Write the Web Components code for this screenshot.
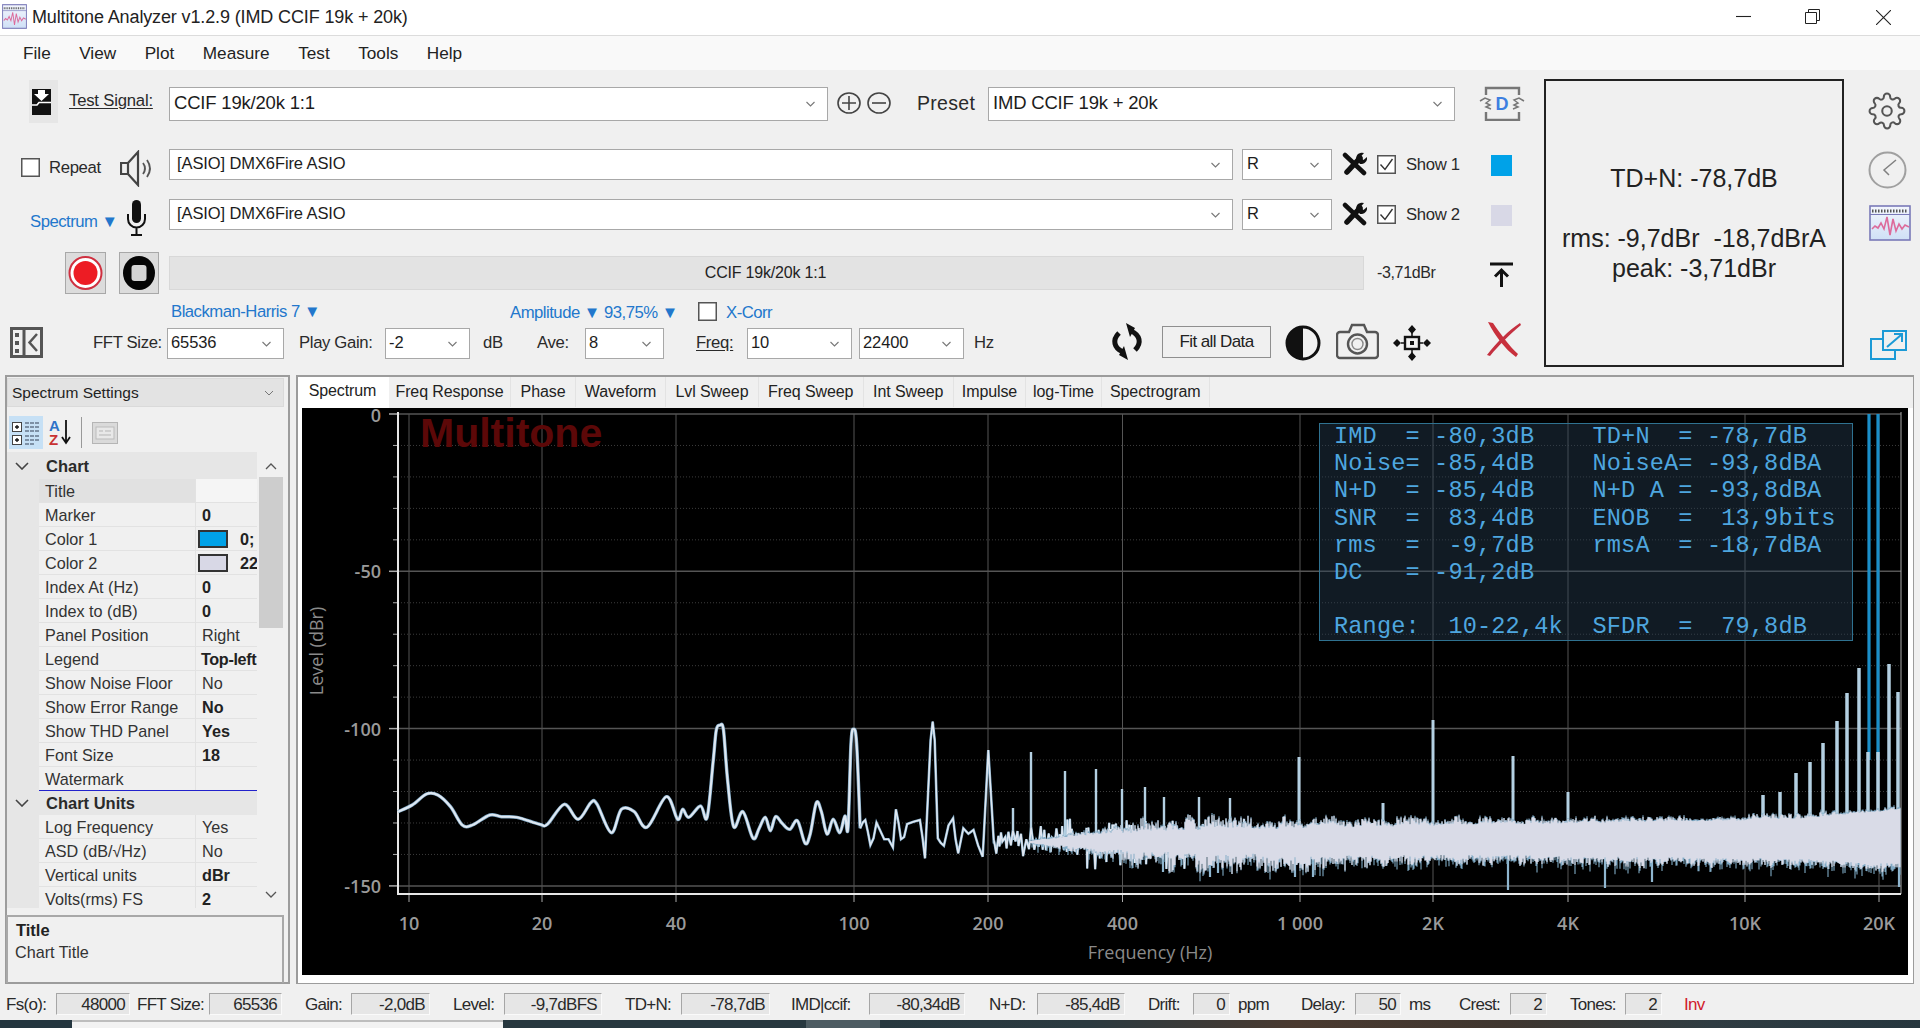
<!DOCTYPE html>
<html>
<head>
<meta charset="utf-8">
<title>Multitone Analyzer</title>
<style>
  html, body { margin: 0; padding: 0; background: #f0f0f0; }
  body { font-family: "Liberation Sans", "DejaVu Sans", sans-serif; color: #1c1c1c; }
</style>
</head>
<body>
<mt-app></mt-app>
<script>
const ICONS = {
  wave: [42, 36, `<defs><linearGradient id="wg" x1="0" y1="0" x2="0" y2="1"><stop offset="0" stop-color="#f3f6fd"/><stop offset="1" stop-color="#cfe0f6"/></linearGradient></defs>
    <rect x="1" y="1" width="40" height="34" fill="url(#wg)" stroke="#7a7ab8" stroke-width="1.6"/>
    <path d="M3 6H39" stroke="#555" stroke-width="3" stroke-dasharray="1.5 1.5"/><path d="M1 9.5H41" stroke="#7a7ab8"/>
    <path d="M3 24l3-3 3 2 3-5 3 6 3-12 3 18 3-16 3 12 3-7 3 5 3-4 4 2" fill="none" stroke="#dd6b9b" stroke-width="1.6"/>`],
  signal: [29, 43, `<rect width="29" height="43" fill="#e6e6e6"/><path d="M3 9h19v26H3z" fill="#111"/>
    <path d="M9 10h7v4h4l-7.500 7L5 14h4z" fill="#fff"/><path d="M3 25H8l2-2.500h12" fill="none" stroke="#fff" stroke-width="1.600"/>`],
  plus: [24, 22, `<ellipse cx="12" cy="11" rx="11" ry="10" fill="none" stroke="#444" stroke-width="1.600"/><path d="M5 11H19M12 4V18" stroke="#444" stroke-width="1.600"/>`],
  minus: [24, 22, `<ellipse cx="12" cy="11" rx="11" ry="10" fill="none" stroke="#444" stroke-width="1.600"/><path d="M5 11H19" stroke="#444" stroke-width="1.600"/>`],
  dsp: [46, 35, `<path d="M7 9V2H40V9M40 26V34H7V26" fill="none" stroke="#777" stroke-width="2.400"/><path d="M1 15l5-3 5 2-4 3 4 2-4 2 5 2M45 15l-5-3-5 2 4 3-4 2 4 2-5 2" fill="none" stroke="#777" stroke-width="1.500"/>
    <text x="23" y="23.500" text-anchor="middle" font-family="Liberation Sans" font-weight="700" font-size="18" fill="#3d7fe0">D</text>`],
  speaker: [35, 37, `<path d="M1 13h7v11H1zM8 13 18 2V35L8 24" fill="none" stroke="#444" stroke-width="2.200"/><path d="M23 13q4 5.500 0 11M27 10q6 8.500 0 17" fill="none" stroke="#555" stroke-width="1.800"/>`],
  mic: [21, 36, `<rect x="6" y="0" width="9" height="23" rx="4.500" fill="#111"/><path d="M2 14v5a8.500 8.500 0 0 0 17 0v-5M10.500 28V35M5 35H16" fill="none" stroke="#111" stroke-width="2"/>`],
  tools: [25, 24, `<path d="M3 3 22 21" stroke="#111" stroke-width="4.500" stroke-linecap="round"/><path d="M18 6 5 20" stroke="#111" stroke-width="5.500" stroke-linecap="round"/>
    <path d="M14 7a6 6 0 0 1 8-6l-3.500 4 3 3 3.500-3a6 6 0 0 1-7 7z" fill="#111"/>`],
  record: [41, 42, `<rect x=".5" y=".5" width="40" height="41" fill="#dcdcdc" stroke="#a8a8a8"/><circle cx="20.500" cy="21" r="16" fill="#fff" stroke="#cf3040" stroke-width="2"/><circle cx="20.500" cy="21" r="12" fill="#ed1c24"/>`],
  stop: [40, 42, `<rect x=".5" y=".5" width="39" height="41" fill="#dcdcdc" stroke="#a8a8a8"/><ellipse cx="20" cy="21" rx="16" ry="17" fill="#050505"/><rect x="12.500" y="13" width="15" height="16" rx="3" fill="#d4d4d4"/>`],
  up: [25, 25, `<path d="M1 2H24M12.500 25V8M6 14.500 12.500 8 19 14.500" fill="none" stroke="#111" stroke-width="3"/>`],
  toggle: [33, 31, `<rect x="1.500" y="1.500" width="30" height="28" fill="none" stroke="#555" stroke-width="3"/><path d="M14 2V29" stroke="#555" stroke-width="3"/><path d="M5 6h4v4H5zM5 14h4v4H5zM5 22h4v4H5z" fill="#555"/><path d="M27 7 19.500 15.500 27 24" fill="none" stroke="#555" stroke-width="2.500"/>`],
  refresh: [32, 37, `<path d="M24 27C31 20 29 12 20 8" fill="none" stroke="#111" stroke-width="5"/><path d="M8 10C1 17 3 25 12 29" fill="none" stroke="#111" stroke-width="5"/><path d="M15 0 24 5 19 14zM17 37 8 32 13 23z" fill="#111"/>`],
  contrast: [36, 36, `<circle cx="18" cy="18" r="16" fill="none" stroke="#111" stroke-width="3"/><path d="M18 2a16 16 0 0 0 0 32z" fill="#111"/>`],
  camera: [43, 37, `<path d="M4 9h9l3-7h12l3 7h8a3 3 0 0 1 3 3v20a3 3 0 0 1-3 3H4a3 3 0 0 1-3-3V12a3 3 0 0 1 3-3z" fill="none" stroke="#555" stroke-width="2.400"/><circle cx="21.500" cy="21" r="9.500" fill="none" stroke="#555" stroke-width="2.400"/><circle cx="21.500" cy="21" r="5.500" fill="none" stroke="#888" stroke-width="1.400"/>`],
  move: [38, 36, `<rect x="12" y="12" width="14" height="12" fill="none" stroke="#111" stroke-width="2.400"/><rect x="17" y="16" width="4" height="4" fill="#111"/><path d="M19 0l4 4.500-4 4.500-4-4.500zM19 27l4 4.500-4 4.500-4-4.500zM0 18l4-4 4 4-4 4zM30 18l4-4 4 4-4 4z" fill="#111"/><path d="M19 8V12M19 24V28M8 18H12M26 18H30" stroke="#111" stroke-width="1.500"/>`],
  cross: [36, 35, `<path d="M3 0 8 1C15 11 24 24 33 32L31 35C20 27 10 14 3 0z" fill="#c8303c"/><path d="M35 1C24 8 11 21 2 33L5 34C14 23 26 11 36 3z" fill="#c43040"/>`],
  gear: [24, 24, `<g fill="none" stroke="#555" stroke-width="1.300"><path d="M12 15a3 3 0 1 0 0-6 3 3 0 0 0 0 6z"/><path d="M19.400 15a1.650 1.650 0 0 0 .33 1.820l.06.06a2 2 0 0 1 0 2.830 2 2 0 0 1-2.830 0l-.06-.06a1.650 1.650 0 0 0-1.820-.33 1.650 1.650 0 0 0-1 1.510V21a2 2 0 0 1-2 2 2 2 0 0 1-2-2v-.09A1.650 1.650 0 0 0 9 19.400a1.650 1.650 0 0 0-1.820.33l-.06.06a2 2 0 0 1-2.830 0 2 2 0 0 1 0-2.830l.06-.06a1.650 1.650 0 0 0 .33-1.820 1.650 1.650 0 0 0-1.510-1H3a2 2 0 0 1-2-2 2 2 0 0 1 2-2h.09A1.650 1.650 0 0 0 4.600 9a1.650 1.650 0 0 0-.33-1.820l-.06-.06a2 2 0 0 1 0-2.830 2 2 0 0 1 2.830 0l.06.06a1.650 1.650 0 0 0 1.820.33H9a1.650 1.650 0 0 0 1-1.510V3a2 2 0 0 1 2-2 2 2 0 0 1 2 2v.09a1.650 1.650 0 0 0 1 1.510 1.650 1.650 0 0 0 1.820-.33l.06-.06a2 2 0 0 1 2.830 0 2 2 0 0 1 0 2.830l-.06.06a1.650 1.650 0 0 0-.33 1.820V9a1.650 1.650 0 0 0 1.510 1H21a2 2 0 0 1 2 2 2 2 0 0 1-2 2h-.09a1.650 1.650 0 0 0-1.510 1z"/></g>`],
  clock: [39, 38, `<ellipse cx="19.500" cy="19" rx="18" ry="17.500" fill="none" stroke="#a0a0a0" stroke-width="2"/><path d="M28 9 16 19l5 5" fill="none" stroke="#808080" stroke-width="1.500"/>`],
  popout: [37, 30, `<rect x="1" y="9" width="24" height="20" fill="none" stroke="#1c9ad6" stroke-width="2"/><rect x="13" y="1" width="23" height="19" fill="#f0f0f0" stroke="#1c9ad6" stroke-width="2"/><path d="M17 17 31 5M24 4H32V12" fill="none" stroke="#1c9ad6" stroke-width="2"/>`],
  min: [15, 15, `<path d="M0 7.500H15" stroke="#222" stroke-width="1.100"/>`],
  restore: [15, 15, `<path d="M.5 3.500h11v11H.5zM3.500 3.500V.5h11v11h-3" fill="none" stroke="#222"/>`],
  close: [15, 15, `<path d="M0 0 15 15M15 0 0 15" stroke="#222" stroke-width="1.100"/>`],
  cats: [34, 33, `<rect width="34" height="33" fill="#c6e0f5"/><g fill="#fff" stroke="#444"><rect x="3.500" y="6.500" width="9" height="9"/><rect x="3.500" y="19.500" width="9" height="9"/></g><path d="M6 11h4M8 9v4M6 24h4M8 22v4" stroke="#111" stroke-width="1.300"/><path d="M16 7h15M16 11h15M16 15h15M16 20h15M16 24h15M16 28h10" stroke="#65758a" stroke-width="1.300" stroke-dasharray="4 1"/>`],
  az: [24, 33, `<text x="1" y="15" font-family="Liberation Sans" font-weight="700" font-size="15" fill="#2f73c8">A</text><text x="1" y="29" font-family="Liberation Sans" font-weight="700" font-size="15" fill="#c83232">Z</text><path d="M18 4V26M14 21l4 6 4-6" fill="none" stroke="#111" stroke-width="1.800"/>`],
  pages: [26, 22, `<rect x=".5" y=".5" width="25" height="21" fill="#dadada" stroke="#b5b5b5"/><rect x="4" y="5" width="18" height="12" fill="#e8e8e8" stroke="#bbb"/><path d="M7 9h4M13 9h6M7 13h12" stroke="#b5b5b5"/>`]
};

class MtIcon extends HTMLElement {
  constructor() {
    super();
    this.attachShadow({ mode: 'open' });
  }
  connectedCallback() {
    const [w, h, body] = ICONS[this.getAttribute('name')];
    const dw = this.getAttribute('w') || w;
    const dh = this.getAttribute('h') || h;
    this.shadowRoot.innerHTML = `<style>:host{display:block;flex:none;width:${dw}px;height:${dh}px}svg{display:block}</style>
      <svg width="${dw}" height="${dh}" viewBox="0 0 ${w} ${h}" preserveAspectRatio="none">${body}</svg>`;
  }
}
customElements.define('mt-icon', MtIcon);

class MtCombo extends HTMLElement {
  constructor() {
    super();
    this.attachShadow({ mode: 'open' });
  }
  connectedCallback() {
    this.shadowRoot.innerHTML = `<style>
      :host{display:flex;flex:none;box-sizing:border-box;align-items:center;background:#fff;border:1px solid #a8a8a8;
        font-size:var(--combo-size,16.5px);letter-spacing:var(--combo-ls,-.1px);color:#1c1c1c;height:31px}
      span{flex:1;padding:0 0 2px var(--combo-pad,3px);white-space:nowrap}
      svg{flex:none;margin-right:12px}
    </style><span>${this.getAttribute('value') || ''}</span>
    <svg width="9" height="6" viewBox="0 0 9 6"><path d="M.5 1 4.500 5 8.500 1" fill="none" stroke="#777" stroke-width="1.100"/></svg>`;
  }
}
customElements.define('mt-combo', MtCombo);

class MtCheck extends HTMLElement {
  constructor() {
    super();
    this.attachShadow({ mode: 'open' });
  }
  connectedCallback() {
    const tick = this.hasAttribute('checked') ? '<path d="M3.500 9.500 8 14.500 15.500 4" fill="none" stroke="#333" stroke-width="1.400"/>' : '';
    this.shadowRoot.innerHTML = `<style>:host{display:block;flex:none;width:19px;height:19px}svg{display:block}</style>
      <svg width="19" height="19" viewBox="0 0 19 19"><rect x=".75" y=".75" width="17.500" height="17.500" fill="#fff" stroke="#555" stroke-width="1.500"/>${tick}</svg>`;
  }
}
customElements.define('mt-check', MtCheck);

class MtTitlebar extends HTMLElement {
  constructor() {
    super();
    this.attachShadow({ mode: 'open' });
  }
  connectedCallback() {
    this.shadowRoot.innerHTML = `<style>
      :host{display:flex;flex:none;height:36px;box-sizing:border-box;background:#fff;border-bottom:1px solid #dcdcdc;align-items:center;padding-left:2px}
      .t{margin-left:5px;font-size:18px;letter-spacing:-.13px;flex:1;color:#222;white-space:nowrap}
      .w{margin-bottom:2px}
    </style>
    <mt-icon name="wave" w="25" h="25" class="w"></mt-icon><div class="t"><slot></slot></div>
    <mt-icon name="min" class="w"></mt-icon><mt-icon name="restore" class="w" style="margin-left:54px"></mt-icon><mt-icon name="close" class="w" style="margin:0 29px 0 56px"></mt-icon>`;
  }
}
customElements.define('mt-titlebar', MtTitlebar);

class MtMenubar extends HTMLElement {
  constructor() {
    super();
    this.attachShadow({ mode: 'open' });
  }
  connectedCallback() {
    const items = ['File', 'View', 'Plot', 'Measure', 'Test', 'Tools', 'Help'];
    this.shadowRoot.innerHTML = `<style>
      :host{display:flex;flex:none;height:34px;background:#f9f9f9;align-items:center;padding-left:23px;gap:28.500px;font-size:17.200px;color:#222}
    </style>${items.map(i => `<span>${i}</span>`).join('')}`;
  }
}
customElements.define('mt-menubar', MtMenubar);

class MtToolbar extends HTMLElement {
  constructor() {
    super();
    this.attachShadow({ mode: 'open' });
  }
  connectedCallback() {
    this.shadowRoot.innerHTML = `<style>
      :host{display:flex;flex:none;height:305px;background:#f0f0f0;--combo-size:16.500px}
      .left{width:1544px;flex:none;display:flex;flex-direction:column}
      .row{display:flex;align-items:flex-start;flex:none}
      .t{flex:none;line-height:20px;font-size:16.700px;letter-spacing:-.35px;white-space:nowrap;color:#2a2a2a}
      .b{color:#2277cc;letter-spacing:-.5px}
      u{text-underline-offset:2px}
      .bar{flex:none;box-sizing:border-box;height:34px;background:#e3e3e3;border:1px solid #d8d8d8;display:flex;align-items:center;justify-content:center;font-size:16px;letter-spacing:-.2px;padding-right:2px;color:#222}
      .sq{flex:none;width:21px;height:21px}
      .big{--combo-size:18.500px;--combo-ls:-.2px}
      mt-combo.big{height:34px}
      button{flex:none;box-sizing:border-box;width:109px;height:32px;background:#f0f0f0;border:1.500px solid #8f8f8f;font:inherit;font-size:17px;letter-spacing:-.6px;color:#222;padding:0}
      .thd{flex:none;box-sizing:border-box;width:300px;height:288px;margin-top:9px;border:2px solid #222;display:flex;flex-direction:column;align-items:center;justify-content:center;font-size:25px;line-height:30px;color:#222;white-space:pre}
      .side{flex:none;margin-left:24px;display:flex;flex-direction:column}
    </style>
    <div class="left">
      <div class="row" style="margin-top:10px;height:43px">
        <mt-icon name="signal" style="margin-left:29px"></mt-icon>
        <span class="t" style="margin:11px 0 0 11px;width:85px;letter-spacing:-.2px"><u>Test Signal:</u></span>
        <mt-combo class="big" value="CCIF 19k/20k 1:1" style="margin:7px 0 0 15px;width:659px;--combo-pad:4px"></mt-combo>
        <mt-icon name="plus" style="margin:12px 0 0 9px"></mt-icon>
        <mt-icon name="minus" style="margin:12px 0 0 6px"></mt-icon>
        <span class="t" style="margin:13px 0 0 26px;width:61px;font-size:19.500px;letter-spacing:.3px">Preset</span>
        <mt-combo class="big" value="IMD CCIF 19k + 20k" style="margin:7px 0 0 10px;width:467px;--combo-pad:4px"></mt-combo>
        <mt-icon name="dsp" style="margin:6px 0 0 24px"></mt-icon>
      </div>
      <div class="row" style="margin-top:26px;height:38px">
        <mt-check style="margin:9px 0 0 21px"></mt-check>
        <span class="t" style="margin:9px 0 0 9px;width:51px">Repeat</span>
        <mt-icon name="speaker" style="margin:1px 0 0 20px"></mt-icon>
        <mt-combo value="[ASIO] DMX6Fire ASIO" style="margin-left:14px;width:1064px;--combo-pad:7px"></mt-combo>
        <mt-combo value="R" style="margin-left:9px;width:90px;--combo-pad:4px"></mt-combo>
        <mt-icon name="tools" style="margin:3px 0 0 10px"></mt-icon>
        <mt-check checked style="margin:6px 0 0 10px"></mt-check>
        <span class="t" style="margin:6px 0 0 10px;width:53px">Show 1</span>
        <div class="sq" style="margin:6px 0 0 32px;background:#00a2e8"></div>
      </div>
      <div class="row" style="margin-top:12px;height:37px">
        <span class="t b" style="margin:13px 0 0 30px;width:96px">Spectrum ▼</span>
        <mt-icon name="mic" style="margin-top:1px"></mt-icon>
        <mt-combo value="[ASIO] DMX6Fire ASIO" style="margin-left:22px;width:1064px;--combo-pad:7px"></mt-combo>
        <mt-combo value="R" style="margin-left:9px;width:90px;--combo-pad:4px"></mt-combo>
        <mt-icon name="tools" style="margin:3px 0 0 10px"></mt-icon>
        <mt-check checked style="margin:6px 0 0 10px"></mt-check>
        <span class="t" style="margin:6px 0 0 10px;width:53px">Show 2</span>
        <div class="sq" style="margin:6px 0 0 32px;background:#d8d8e6"></div>
      </div>
      <div class="row" style="margin-top:16px;height:42px">
        <mt-icon name="record" style="margin-left:65px"></mt-icon>
        <mt-icon name="stop" style="margin-left:13px"></mt-icon>
        <div class="bar" style="margin:4px 0 0 10px;width:1195px">CCIF 19k/20k 1:1</div>
        <span class="t" style="margin:11px 0 0 13px;width:60px;font-size:16px">-3,71dBr</span>
        <mt-icon name="up" style="margin:10px 0 0 52px"></mt-icon>
      </div>
      <div class="row" style="margin-top:8px;height:21px">
        <span class="t b" style="margin-left:171px;width:339px">Blackman-Harris 7 ▼</span>
        <span class="t b" style="margin-top:1px;width:188px">Amplitude ▼ 93,75% ▼</span>
        <mt-check></mt-check>
        <span class="t b" style="margin:1px 0 0 9px">X-Corr</span>
      </div>
      <div class="row" style="height:37px">
        <mt-icon name="toggle" style="margin:4px 0 0 10px"></mt-icon>
        <span class="t" style="margin:10px 0 0 50px;width:74px">FFT Size:</span>
        <mt-combo value="65536" style="margin-top:5px;width:117px"></mt-combo>
        <span class="t" style="margin:10px 0 0 15px;width:86px">Play Gain:</span>
        <mt-combo value="-2" style="margin-top:5px;width:85px"></mt-combo>
        <span class="t" style="margin:10px 0 0 13px;width:54px">dB</span>
        <span class="t" style="margin-top:10px;width:48px">Ave:</span>
        <mt-combo value="8" style="margin-top:5px;width:79px"></mt-combo>
        <span class="t" style="margin:10px 0 0 32px;width:51px"><u>Freq:</u></span>
        <mt-combo value="10" style="margin-top:5px;width:105px"></mt-combo>
        <mt-combo value="22400" style="margin:5px 0 0 7px;width:105px"></mt-combo>
        <span class="t" style="margin:10px 0 0 10px;width:137px">Hz</span>
        <mt-icon name="refresh"></mt-icon>
        <button style="margin:3px 0 0 19px">Fit all Data</button>
        <mt-icon name="contrast" style="margin:2px 0 0 14px"></mt-icon>
        <mt-icon name="camera" style="margin-left:15px"></mt-icon>
        <mt-icon name="move" style="margin:2px 0 0 14px"></mt-icon>
        <mt-icon name="cross" style="margin:-1px 0 0 54px"></mt-icon>
      </div>
    </div>
    <div class="thd">
      <div>TD+N: -78,7dB</div>
      <div style="height:30px"></div>
      <div>rms: -9,7dBr  -18,7dBrA</div>
      <div>peak: -3,71dBr</div>
    </div>
    <div class="side">
      <mt-icon name="gear" w="38" h="38" style="margin-top:22px"></mt-icon>
      <mt-icon name="clock" style="margin-top:21px"></mt-icon>
      <mt-icon name="wave" style="margin-top:16px;margin-left:1px"></mt-icon>
      <mt-icon name="popout" style="margin-top:89px;margin-left:2px"></mt-icon>
    </div>`;
  }
}
customElements.define('mt-toolbar', MtToolbar);

class MtProps extends HTMLElement {
  constructor() {
    super();
    this.attachShadow({ mode: 'open' });
  }
  connectedCallback() {
    const rows = [
      ['h', 'Chart'], ['Title', '', 's'], ['Marker', '0', 'b'],
      ['Color 1', '0;', 'c', '#00a2e8'], ['Color 2', '22', 'c', '#d8d8e6'],
      ['Index At (Hz)', '0', 'b'], ['Index to (dB)', '0', 'b'], ['Panel Position', 'Right'],
      ['Legend', 'Top-left', 'b tight'], ['Show Noise Floor', 'No'], ['Show Error Range', 'No', 'b'],
      ['Show THD Panel', 'Yes', 'b'], ['Font Size', '18', 'b'], ['Watermark', '', 'l'],
      ['h', 'Chart  Units'], ['Log Frequency', 'Yes'], ['ASD (dB/√Hz)', 'No'],
      ['Vertical units', 'dBr', 'b'], ['Volts(rms) FS', '2', 'b']
    ];
    const html = rows.map((r, i) => {
      if (r[0] === 'h') {
        return `<div class="r hd${i ? '' : ' first'}"><svg width="14" height="8" viewBox="0 0 14 8"><path d="M1 1 7 7 13 1" fill="none" stroke="#444" stroke-width="1.600"/></svg><b>${r[1]}</b></div>`;
      }
      const cls = r[2] || '';
      let val = r[1];
      if (cls === 'c') val = `<i style="background:${r[3]}"></i><b>${r[1]}</b>`;
      else if (cls.startsWith('b')) val = `<b>${r[1]}</b>`;
      return `<div class="r ${cls}"><span class="g"></span><span class="k">${r[0]}</span><span class="v">${val}</span></div>`;
    }).join('');
    this.shadowRoot.innerHTML = `<style>
      :host{display:flex;flex:none;box-sizing:border-box;width:285px;height:609px;flex-direction:column;border:2px solid #9c9c9c;background:#f0f0f0;font-size:16.200px;color:#333}
      .head{flex:none;height:29px;margin:1px 4px 0 0;background:#e3e3e3;border:1px solid #dadada;box-sizing:border-box;display:flex;align-items:center;justify-content:space-between;padding:0 9px 0 4px;font-size:15.500px;color:#222}
      .tools{flex:none;height:33px;margin-top:9px;display:flex;align-items:center;padding-left:2px}
      .sep{width:1px;height:31px;background:#999;margin:0 10px 0 9px}
      .wrap{flex:none;height:456px;margin-top:3px;display:flex;overflow:hidden}
      .grid{width:250px;flex:none}
      .r{display:flex;height:24px;box-sizing:border-box;align-items:center;white-space:nowrap;border-bottom:1px solid #e2e2e2}
      .g{width:32px;flex:none;align-self:stretch;background:#e6e6e6;margin-bottom:-1px}
      .k{width:156px;flex:none;padding-left:6px;box-sizing:border-box;align-self:stretch;line-height:24px}
      .v{flex:1;min-width:0;overflow:hidden;padding:1px 0 0 6px;border-left:1px solid #e2e2e2;align-self:stretch;display:flex;align-items:center}
      .v b{color:#222}
      .tight .v{padding-left:5px;letter-spacing:-.35px}
      .v i{flex:none;display:block;box-sizing:border-box;width:30px;height:18px;border:2px solid #333;margin:0 12px 0 -4px}
      .hd{background:#e6e6e6;font-size:16.500px;border:0}
      .hd.first{height:27px;padding-top:1px}
      .hd svg{flex:none;margin:0 17px 0 8px}
      .hd b{color:#2a2a2a}
      .s .k{background:#e1e1e1}
      .s .v{background:#f5f5f5}
      .l{border-bottom:1.500px solid #2222cc}
      .bar{flex:none;width:25px;margin-left:1px;display:flex;flex-direction:column;align-items:center}
      .bar svg{flex:none}
      .th{width:24px;height:151px;background:#cdcdcd;margin-top:7px;flex:none}
      .desc{flex:none;box-sizing:border-box;height:68px;margin:7px 4px 0 -1px;border:2px solid #a8a8a8;border-bottom:0;padding:2px 0 0 8px;line-height:22px}
      .desc b{display:block;font-size:16.500px;color:#222}
      .desc span{margin-left:-1px}
    </style>
    <div class="head">Spectrum Settings<svg width="10" height="6" viewBox="0 0 10 6"><path d="M1 1 5 5 9 1" fill="none" stroke="#777"/></svg></div>
    <div class="tools"><mt-icon name="cats"></mt-icon><mt-icon name="az" style="margin-left:5px"></mt-icon><div class="sep"></div><mt-icon name="pages"></mt-icon></div>
    <div class="wrap">
      <div class="grid">${html}</div>
      <div class="bar">
        <svg style="margin-top:11px" width="12" height="7" viewBox="0 0 12 7"><path d="M1 6 6 1 11 6" fill="none" stroke="#555" stroke-width="1.300"/></svg>
        <div class="th"></div>
        <svg style="margin-top:263px" width="12" height="7" viewBox="0 0 12 7"><path d="M1 1 6 6 11 1" fill="none" stroke="#555" stroke-width="1.300"/></svg>
      </div>
    </div>
    <div class="desc"><b>Title</b><span>Chart Title</span></div>`;
  }
}
customElements.define('mt-props', MtProps);

class MtLegend extends HTMLElement {
  constructor() {
    super();
    this.attachShadow({ mode: 'open' });
  }
  connectedCallback() {
    const rows = [
      ['IMD  = -80,3dB', 'TD+N  = -78,7dB'],
      ['Noise= -85,4dB', 'NoiseA= -93,8dBA'],
      ['N+D  = -85,4dB', 'N+D A = -93,8dBA'],
      ['SNR  =  83,4dB', 'ENOB  =  13,9bits'],
      ['rms  =  -9,7dB', 'rmsA  = -18,7dBA'],
      ['DC   = -91,2dB', ' '],
      [' ', ' '],
      ['Range:  10-22,4k', 'SFDR  =  79,8dB']
    ];
    this.shadowRoot.innerHTML = `<style>
      :host{position:absolute;left:1017px;top:15px;width:534px;height:218px;box-sizing:border-box;background:rgba(40,65,85,.42);border:1.500px solid #2f7290;
        font-family:"Liberation Mono",monospace;font-size:23.600px;letter-spacing:.14px;line-height:27.200px;color:#4ea6df;white-space:pre;padding-left:14px;margin-top:0}
      .l{display:flex;height:27.200px;position:relative;top:-1px}
      .a{width:258.500px;flex:none}
    </style>${rows.map(r => `<div class="l"><span class="a">${r[0]}</span><span>${r[1]}</span></div>`).join('')}`;
  }
}
customElements.define('mt-legend', MtLegend);

class MtChart extends HTMLElement {
  constructor() {
    super();
    this.attachShadow({ mode: 'open' });
  }
  connectedCallback() {
    this.render();
  }
  render() {
    // seeded so the noise floor comes out the same each run
    let seed = 48271;
    const rnd = () => { seed = (seed * 16807) % 2147483647; return seed / 2147483647; };
    const lerp = (tbl, x) => {
      if (x <= tbl[0][0]) return [tbl[0][1], tbl[0][2]];
      for (let i = 1; i < tbl.length; i++) {
        if (x <= tbl[i][0]) {
          const a = tbl[i - 1], b = tbl[i], t = (x - a[0]) / (b[0] - a[0]);
          return [a[1] + (b[1] - a[1]) * t, a[2] + (b[2] - a[2]) * t];
        }
      }
      const l = tbl[tbl.length - 1];
      return [l[1], l[2]];
    };
    const xt = [[10, 409], [20, 542], [40, 676], [100, 854], [200, 988], [400, 1122.5], ['1 000', 1300], ['2K', 1433], ['4K', 1568], ['10K', 1745], ['20K', 1879]];
    const L = 398, R = 1901, T = 414, B = 894;
    const yOf = db => 414 + (-db) * 3.146;
    let grid = '';
    for (let d = -10; d >= -140; d -= 10) {
      if (d % 50) grid += `<path d="M${L} ${yOf(d)}H${R}" stroke="#3c3c3c" stroke-dasharray="1 2"/><path d="M393 ${yOf(d)}H${L}" stroke="#aaa"/>`;
    }
    for (const d of [0, -50, -100, -150]) {
      grid += `<path d="M${L} ${yOf(d)}H${R}" stroke="#555" stroke-width="1.500"/><path d="M389 ${yOf(d)}H${L}" stroke="#aaa" stroke-width="1.500"/>`;
      grid += `<text x="381" y="${yOf(d) + (d ? 7 : 8)}" text-anchor="end" class="n">${d}</text>`;
    }
    for (const [lab, x] of xt) {
      grid += `<path d="M${x} ${T}V${B}" stroke="#555"/><path d="M${x} ${B}V902" stroke="#aaa"/>`;
      grid += `<text x="${x}" y="930" text-anchor="middle" class="n">${lab}</text>`;
    }
    // hand traced low end of the trace, in page pixels
    const toPage = s => s.split(' ').map(p => { const [a, b] = p.split(','); return [a / 1.96 + 300, b / 3 + 680]; });
    const low = toPage('192,395 220,375 248,342 270,345 295,380 318,435 338,435 372,405 395,410 425,412 470,433 485,433 518,373 545,418 570,368 582,372 610,458 630,388 655,395 680,442 718,350 740,418 750,388 762,412 785,378 798,412 810,240 816,150 823,136 830,150 838,300 850,440 868,395 888,475 900,445 912,412 922,452 932,410 945,430 960,448 975,422 990,490 1000,462 1012,368 1022,395 1033,462 1045,418 1058,458 1068,408 1074,445 1080,190 1085,148 1091,190 1098,445');
    // catmull-rom through the traced points, so the line stays round like the original
    let lowPath = `M${low[0][0].toFixed(1)} ${low[0][1].toFixed(1)}`;
    for (let i = 0; i < low.length - 1; i++) {
      const p0 = low[Math.max(0, i - 1)], p1 = low[i], p2 = low[i + 1], p3 = low[Math.min(low.length - 1, i + 2)];
      const c1x = p1[0] + (p2[0] - p0[0]) / 6, c1y = p1[1] + (p2[1] - p0[1]) / 6;
      const c2x = p2[0] - (p3[0] - p1[0]) / 6, c2y = p2[1] - (p3[1] - p1[1]) / 6;
      lowPath += `C${c1x.toFixed(1)} ${c1y.toFixed(1)} ${c2x.toFixed(1)} ${c2y.toFixed(1)} ${p2[0].toFixed(1)} ${p2[1].toFixed(1)}`;
    }
    // above 100 Hz the trace is jagged: straight segments with a jittered point between
    const mid = toPage('1098,445 1108,420 1118,495 1130,428 1145,478 1162,502 1168,388 1178,478 1190,432 1215,420 1225,535 1236,180 1240,125 1244,180 1250,475 1262,497 1280,415 1290,520 1300,445 1320,450 1338,530 1349,210 1360,490');
    const midPts = [];
    mid.forEach((p, i) => {
      midPts.push(p);
      const n = mid[i + 1];
      if (n && n[0] - p[0] > 5 && Math.abs(n[1] - p[1]) < 40) {
        midPts.push([(p[0] + n[0]) / 2, (p[1] + n[1]) / 2 + (rnd() - .5) * 14]);
      }
    });
    const midStr = midPts.map(p => `${p[0].toFixed(1)},${p[1].toFixed(1)}`).join(' ');
    const env = [[988, 820, 866], [1100, 816, 872], [1200, 814, 876], [1300, 815, 874], [1433, 814, 868], [1568, 816, 868], [1700, 815, 870], [1800, 812, 870], [1901, 806, 874]];
    const core = [[1030, 841, 843], [1100, 836, 847], [1200, 832, 850], [1300, 830, 852], [1500, 826, 853], [1800, 820, 857], [1901, 810, 862]];
    // sparse part of the floor: an irregular zigzag that gets denser to the right
    let zig = [], up = true, xz = 994;
    while (xz < 1250) {
      const [et, eb] = lerp(env, xz);
      const c = 841;
      const a = .35 + .65 * rnd();
      const y = up ? c - a * rnd() * (c - et) : c + a * rnd() * (eb - c);
      zig.push(`${xz.toFixed(1)},${y.toFixed(1)}`);
      up = !up;
      xz += xz < 1060 ? .9 + rnd() * 2.4 : .5 + rnd() * 1.3;
    }
    // dense part: one column a pixel, with the amplitude held over short blocks for the lumpy edge
    let edge = '', solid = '', hold = 0, ampT = 1, ampB = 1;
    for (let x = 1030; x < R; x += 1) {
      if (--hold <= 0) { hold = 2 + Math.floor(rnd() * 9); ampT = .35 + .65 * rnd(); ampB = .35 + .65 * rnd(); }
      const [et, eb] = lerp(env, x), [ct, cb] = lerp(core, x);
      const f = Math.min(1, (x - 1030) / 130);
      const y1 = ct - ampT * (.25 + .75 * rnd()) * (ct - et) * f;
      const y2 = cb + ampB * (.25 + .75 * rnd()) * (eb - cb) * f;
      const rb = rnd();
      edge += `M${x} ${(y1 - rnd() * 2).toFixed(1)}V${(y2 + rb * rb * rb * 9).toFixed(1)}`;
      solid += `M${x} ${y1.toFixed(1)}V${y2.toFixed(1)}`;
    }
    const spikes = [[1013, 808], [1031, 752], [1065, 771], [1096, 769], [1122, 789], [1145, 787], [1164, 797], [1199, 797], [1230, 798], [1299, 757], [1383, 803], [1433, 720], [1513, 756], [1568, 792], [1763, 795], [1780, 792], [1796, 773], [1810, 762], [1823, 743], [1837, 721], [1847, 693], [1859, 668], [1868, 752], [1878, 752], [1889, 664], [1898, 692]];
    const drops = [[1163, 872], [1210, 877], [1218, 873], [1295, 877], [1313, 877], [1508, 890], [1605, 888], [1652, 882], [1899, 887]];
    const sp = spikes.map(([x, y]) => `<path d="M${x} ${y}V840" stroke="#b4d0e2" stroke-width="${x > 1700 ? 3.5 : x > 1290 ? 3 : 2.4}"/>`).join('');
    const dr = drops.map(([x, y]) => `<path d="M${x} 850V${y}" stroke="#8fb6cf" stroke-width="2.200"/>`).join('');
    this.shadowRoot.innerHTML = `<style>
      :host{display:block;position:relative;flex:none;width:1606px;height:567px;background:#000}
      svg{display:block;overflow:visible}
      .n{font-family:"Open Sans",sans-serif;font-size:18px;font-weight:600;fill:#9a9a9a}
      .a{font-family:"Open Sans",sans-serif;font-size:18px;fill:#8a8a8a}
    </style>
    <svg width="1606" height="567" viewBox="302 408 1606 567">
      ${grid}
      <path d="M${R} 412V${B}" stroke="#aaa"/>
      <path d="M${L} 412V${B}H${R}" fill="none" stroke="#e6e6e6" stroke-width="2"/>
      <text x="420" y="447" font-family="Liberation Sans" font-weight="700" font-size="41" fill="#5c0808">Multitone</text>
      <text x="1150" y="959" text-anchor="middle" class="a">Frequency (Hz)</text>
      <text transform="translate(323 651) rotate(-90)" text-anchor="middle" class="a">Level (dBr)</text>
      <path d="M1869 414V760M1878 414V760" stroke="#1b8fc9" stroke-width="3.200"/>
      ${sp}${dr}
      <path d="${lowPath}" fill="none" stroke="#7ca4c0" stroke-width="3.400" stroke-linejoin="round"/>
      <path d="${lowPath}" fill="none" stroke="#dfe8f2" stroke-width="2.100" stroke-linejoin="round"/>
      <polyline points="${midStr}" fill="none" stroke="#7ca4c0" stroke-width="2.600"/>
      <polyline points="${midStr}" fill="none" stroke="#dfe8f2" stroke-width="1.500"/>
      <polyline points="${zig.join(' ')}" fill="none" stroke="#7fa9c4" stroke-width="2.400"/>
      <polyline points="${zig.join(' ')}" fill="none" stroke="#dfe6f0" stroke-width="1.500"/>
      <path d="${edge}" stroke="#7fa9c4" stroke-width="1.100"/>
      <path d="${solid}" stroke="#d9dbe7" stroke-width="1.100"/>
    </svg>
    <mt-legend></mt-legend>`;
  }
}
customElements.define('mt-chart', MtChart);

class MtTabs extends HTMLElement {
  constructor() {
    super();
    this.attachShadow({ mode: 'open' });
  }
  connectedCallback() {
    const tabs = [['Spectrum', 91], ['Freq Response', 122], ['Phase', 65], ['Waveform', 90], ['Lvl Sweep', 93], ['Freq Sweep', 104.5], ['Int Sweep', 90.5], ['Impulse', 72], ['log-Time', 76], ['Spectrogram', 107.5]];
    this.shadowRoot.innerHTML = `<style>
      :host{display:flex;flex:none;box-sizing:border-box;width:1618px;height:609px;margin-left:6px;flex-direction:column;border:2px solid #9c9c9c;border-bottom-width:1px;border-right-width:1px;background:#f0f0f0}
      .strip{flex:none;height:31px;display:flex;font-size:16px;letter-spacing:-.1px;color:#222}
      .tab{flex:none;box-sizing:border-box;display:flex;align-items:center;justify-content:center;border-right:1px solid #e3e3e3;height:30px;white-space:nowrap}
      .tab.on{background:#fff;height:31px;padding:0 2px 3px 0;border-right:0}
      .page{flex:1;background:#fff;padding:0 5px 0 4px}
    </style>
    <div class="strip">${tabs.map(([t, w], i) => `<div class="tab${i ? '' : ' on'}" style="width:${w}px">${t}</div>`).join('')}</div>
    <div class="page"><mt-chart></mt-chart></div>`;
  }
}
customElements.define('mt-tabs', MtTabs);

class MtStat extends HTMLElement {
  constructor() {
    super();
    this.attachShadow({ mode: 'open' });
  }
  connectedCallback() {
    const lw = this.getAttribute('lw');
    const vw = this.getAttribute('vw');
    const unit = this.getAttribute('unit');
    const uw = this.getAttribute('uw');
    this.shadowRoot.innerHTML = `<style>
      :host{display:flex;flex:none;align-items:center;height:22px}
      .l{flex:none;white-space:nowrap;padding-top:1px}
      .v{flex:none;box-sizing:border-box;height:22px;background:#e6e6e6;border:1px solid;border-color:#a6a6a6 #fafafa #fafafa #a6a6a6;text-align:right;padding-right:4px;line-height:21px}
    </style><span class="l" style="width:${lw}px">${this.getAttribute('label')}</span>
    <span class="v" style="width:${vw}px">${this.getAttribute('value')}</span>${unit ? `<span class="l" style="margin-left:8px;width:${uw}px">${unit}</span>` : ''}`;
  }
}
customElements.define('mt-stat', MtStat);

class MtStatusbar extends HTMLElement {
  constructor() {
    super();
    this.attachShadow({ mode: 'open' });
  }
  connectedCallback() {
    this.shadowRoot.innerHTML = `<style>
      :host{display:flex;flex:none;height:35px;box-sizing:border-box;padding-top:8px;background:#f0f0f0;font-size:17px;letter-spacing:-.7px;color:#2a2a2a;white-space:nowrap}
    </style>
    <mt-stat label="Fs(o):" value="48000" lw="50" vw="74" style="margin-left:6px"></mt-stat>
    <mt-stat label="FFT Size:" value="65536" lw="72" vw="73" style="margin-left:7px"></mt-stat>
    <mt-stat label="Gain:" value="-2,0dB" lw="46" vw="79" style="margin-left:23px"></mt-stat>
    <mt-stat label="Level:" value="-9,7dBFS" lw="51" vw="98" style="margin-left:23px"></mt-stat>
    <mt-stat label="TD+N:" value="-78,7dB" lw="56" vw="89" style="margin-left:23px"></mt-stat>
    <mt-stat label="IMD|ccif:" value="-80,34dB" lw="78" vw="96" style="margin-left:21px"></mt-stat>
    <mt-stat label="N+D:" value="-85,4dB" lw="48" vw="88" style="margin-left:24px"></mt-stat>
    <mt-stat label="Drift:" value="0" lw="45" vw="37" unit="ppm" uw="63" style="margin-left:23px"></mt-stat>
    <mt-stat label="Delay:" value="50" lw="54" vw="46" unit="ms" uw="50"></mt-stat>
    <mt-stat label="Crest:" value="2" lw="51" vw="37"></mt-stat>
    <mt-stat label="Tones:" value="2" lw="55" vw="37" style="margin-left:23px"></mt-stat>
    <span style="margin-left:22px;color:#d0202c;line-height:24px">Inv</span>`;
  }
}
customElements.define('mt-statusbar', MtStatusbar);

class MtApp extends HTMLElement {
  constructor() {
    super();
    this.attachShadow({ mode: 'open' });
  }
  connectedCallback() {
    this.shadowRoot.innerHTML = `<style>
      :host{display:flex;flex-direction:column;width:1920px;height:1028px;overflow:hidden;background:#f0f0f0}
      .main{flex:none;display:flex;height:610px;padding-left:5px}
      .task{flex:none;height:8px;display:flex}
      .task div{flex:none;height:8px}
    </style>
    <mt-titlebar>Multitone Analyzer v1.2.9 (IMD CCIF 19k + 20k)</mt-titlebar>
    <mt-menubar></mt-menubar>
    <mt-toolbar></mt-toolbar>
    <div class="main"><mt-props></mt-props><mt-tabs></mt-tabs></div>
    <mt-statusbar></mt-statusbar>
    <div class="task">
      <div style="width:72px;background:#24363f"></div>
      <div style="width:431px;background:#f2f2f2;box-sizing:border-box;border-top:2px solid #bdbdbd"></div>
      <div style="width:303px;background:#27383f"></div>
      <div style="width:74px;background:#4d5c62"></div>
      <div style="flex:1;width:1040px;background:linear-gradient(90deg,#27383f 0,#2b3a40 20%,#4a3a30 40%,#3f362f 60%,#2f3c42 80%,#26363e 100%)"></div>
    </div>`;
  }
}
customElements.define('mt-app', MtApp);
</script>
</body>
</html>
